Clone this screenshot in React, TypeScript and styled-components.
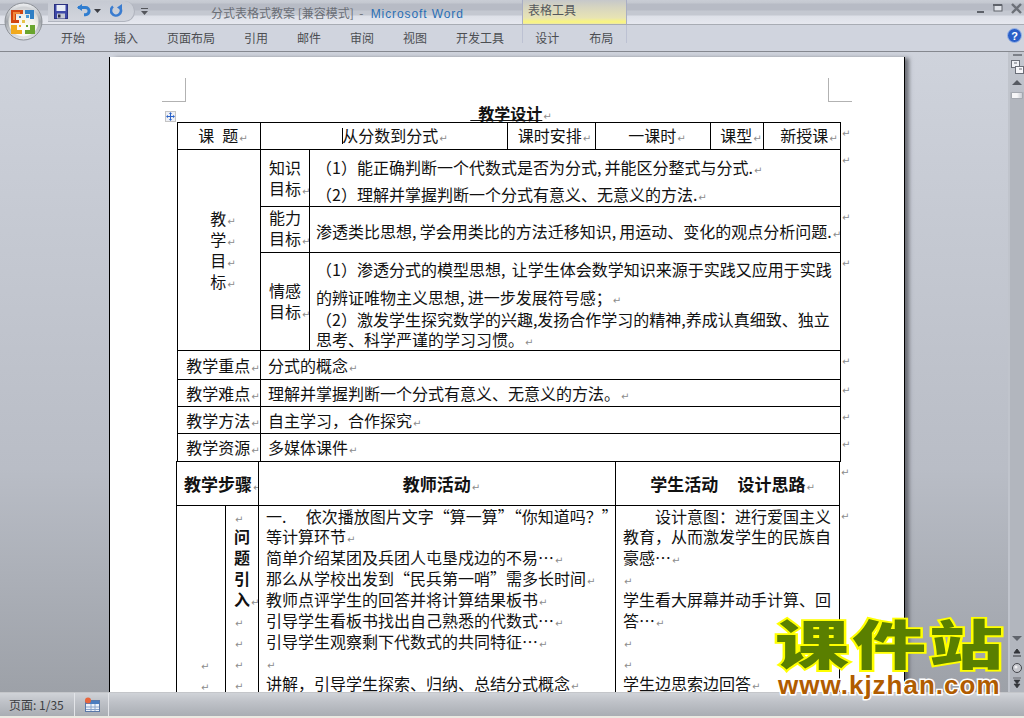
import React from "react"
import styled, { createGlobalStyle } from "styled-components"

const cjk = `"Noto Sans CJK SC", "Liberation Sans", sans-serif`

const GlobalStyle = createGlobalStyle`
  html, body { margin: 0; padding: 0; background: #c8ccd5; }
  body { font-family: ${cjk}; overflow: hidden; }
`

const Window = styled.div`
  position: relative;
  width: 1024px;
  height: 718px;
  display: flex;
  flex-direction: column;
  overflow: hidden;
`

const TitleBar = styled.div`
  height: 24px;
  flex: none;
  display: flex;
  align-items: flex-start;
  padding-left: 48px;
  border-bottom: 1px solid #a8acb4;
  background: linear-gradient(#c9cdd5 0, #c4c8d0 3px, #b7bbc5 4px, #b7bbc5 10px, #c4c8d1 11px, #c4c8d1 15px, #dde0e8 16px, #e6e8ef 24px);
`

const QuickAccess = styled.div`
  width: 87px;
  height: 21px;
  box-sizing: border-box;
  display: flex;
  align-items: center;
  padding-left: 6px;
  border: 1px solid #b0b4be;
  border-left: 0;
  border-top: 0;
  border-radius: 0 11px 11px 0;
  background: linear-gradient(#c6cad3, #d2d5dd);
  margin-top: 1px;
`

const QuickGap = styled.span<{ $w: number }>`
  display: inline-block;
  width: ${(p) => p.$w}px;
`

const CustomizeSlot = styled.div`
  padding-top: 8px;
  line-height: 0;
`

const DocTitle = styled.div`
  width: 310px;
  margin-left: 63px;
  font-size: 12px;
  line-height: 25px;
  color: #6a6e76;
  white-space: nowrap;
  span { color: #2a6fb5; font-family: "Liberation Sans", sans-serif; letter-spacing: 0.9px; margin-left: 2px; }
`

const ContextTitle = styled.div`
  width: 105px;
  height: 24px;
  margin-left: 1px;
  box-sizing: border-box;
  padding-left: 5px;
  font-size: 12px;
  line-height: 20px;
  color: #55575c;
  border-left: 1px solid #a9aec4;
  border-right: 1px solid #a9aec4;
  background: linear-gradient(#c6c8ca 0, #d8d6bf 8px, #e8e4b4 18px, #fbf67c 22px, #ece8a8 24px);
`

const WindowControls = styled.div`
  margin-left: auto;
  padding-top: 2px;
  height: 17px;
  line-height: 0;
`

const TabBar = styled.div`
  height: 26px;
  flex: none;
  display: flex;
  align-items: flex-start;
  padding-left: 61px;
  border-bottom: 1px solid #85888f;
  background: #d0d4de;
`

const TabGroup = styled.div`
  display: flex;
  gap: 29px;
  height: 18px;
`

const ContextGroup = styled(TabGroup)`
  margin-left: 18px;
  width: 105px;
  box-sizing: border-box;
  padding-left: 12px;
  gap: 30px;
  border-left: 1px solid #bcc1d2;
  border-right: 1px solid #bcc1d2;
`

const Tab = styled.div`
  font-size: 12px;
  line-height: 26px;
  color: #4c4e52;
  white-space: nowrap;
`

const HelpSlot = styled.div`
  margin-left: auto;
  margin-top: 3px;
  padding-right: 2px;
  line-height: 0;
`

const Workspace = styled.div`
  flex: 1;
  min-height: 0;
  display: flex;
  overflow: hidden;
  background: linear-gradient(#cfd3dc 0, #c6cad3 25%, #b9bdc6 65%, #9da1a8 100%);
`

const PageArea = styled.div`
  flex: 1;
  min-width: 0;
  padding: 5px 0 0 109px;
  overflow: hidden;
`

const Page = styled.div`
  position: relative;
  width: 727px;
  height: 900px;
  background: #fff;
  border-left: 1px solid #000;
  border-right: 1px solid #000;
  box-shadow: 5px 0 4px -1px rgba(60, 62, 68, 0.65);
  padding: 47px 0 0 67px;
  color: #111;
  font-size: 16px;
`

const CropMark = styled.div<{ $side: "left" | "right" }>`
  position: absolute;
  top: 21px;
  width: 23px;
  height: 23px;
  border-bottom: 1px solid #b2b2b2;
  ${(p) =>
    p.$side === "left"
      ? "left: 52px; border-right: 1px solid #b2b2b2;"
      : "left: 718px; border-left: 1px solid #b2b2b2;"}
`

const TableHandle = styled.div`
  position: absolute;
  top: 54px;
  left: 55px;
  width: 11px;
  height: 11px;
  box-sizing: border-box;
  border: 1px solid #c4c4c4;
  background: #eef0f6;
  line-height: 0;
`

const DocHeading = styled.div`
  width: 664px;
  height: 18px;
  line-height: 18px;
  text-align: center;
  font-weight: 700;
  white-space: pre;
  padding-left: 4px;
  box-sizing: border-box;
  u { text-underline-offset: 0; }
`

const DocTable = styled.table<{ $shift?: number; $up?: number }>`
  width: 682px;
  border-collapse: collapse;
  table-layout: fixed;
  margin-left: ${(p) => p.$shift ?? 0}px;
  margin-top: ${(p) => -(p.$up ?? 0)}px;
  line-height: 21px;
`

const Col = styled.col<{ $w: number }>`
  width: ${(p) => p.$w}px;
`

const Row = styled.tr<{ $h: number }>`
  height: ${(p) => p.$h}px;
`

const Cell = styled.td<{
  $center?: boolean
  $pad?: number
  $top?: boolean
  $bold?: boolean
  $above?: number
  $below?: number
}>`
  border: 1px solid #000;
  padding: ${(p) => p.$above ?? 0}px 0 ${(p) => p.$below ?? 0}px ${(p) => p.$pad ?? 0}px;
  text-align: ${(p) => (p.$center ? "center" : "left")};
  vertical-align: ${(p) => (p.$top ? "top" : "middle")};
  font-weight: ${(p) => (p.$bold ? 700 : 400)};
  font-size: ${(p) => (p.$bold ? 17 : 16)}px;
  white-space: pre;
  overflow: hidden;
`

const RowEnd = styled.td`
  border: 0;
  padding: 0;
  vertical-align: top;
  line-height: 14px;
`

const Line = styled.div<{ $h?: number }>`
  line-height: ${(p) => p.$h ?? 21}px;
  height: ${(p) => p.$h ?? 21}px;
  white-space: pre;
`

const Mark = styled.span`
  font: 10px/1 "DejaVu Sans", sans-serif;
  color: #8c8c8c;
  margin-left: 1px;
  &::before { content: "↵"; }
`

const Caret = styled.span`
  display: inline-block;
  width: 1px;
  height: 16px;
  margin-right: -1px;
  background: #000;
  vertical-align: -2px;
`

const StepMarks = styled.div`
  padding-top: 147px;
`

const StepTitle = styled.div`
  font-weight: 700;
  text-align: left;
  padding-left: 8px;
`

const Scrollbar = styled.div`
  width: 16px;
  flex: none;
  display: flex;
  flex-direction: column;
  align-items: center;
  background: #b2b6be;
  border-left: 2px solid #c0c4cc;
  box-sizing: border-box;
`

const ScrollTop = styled.div`
  height: 40px;
  width: 100%;
  flex: none;
  display: flex;
  flex-direction: column;
  align-items: center;
  background: linear-gradient(#c4c8d0, #bcc0c9);
`

const ScrollThumb = styled.div`
  width: 12px;
  height: 7px;
  flex: none;
  border-radius: 1px;
  border: 1px solid #a4a8b0;
  box-sizing: border-box;
  background: linear-gradient(90deg, #f6f6f8 50%, #c8cbd2);
`

const ScrollFill = styled.div`
  flex: 1;
`

const ScrollFoot = styled.div`
  height: 57px;
  width: 100%;
  flex: none;
  display: flex;
  flex-direction: column;
  align-items: center;
  gap: 3px;
`

const StatusBar = styled.div`
  height: 23px;
  flex: none;
  display: flex;
  border-top: 1px solid #c4c6ca;
  border-bottom: 2px solid #ebeae2;
  background: linear-gradient(#d0d3d8 0, #c0c3c9 35%, #a9adb3 100%);
`

const StatusCell = styled.div<{ $w: number }>`
  width: ${(p) => p.$w}px;
  box-sizing: border-box;
  display: flex;
  align-items: center;
  padding-left: 9px;
  border-right: 1px solid #e2e4e8;
  font-size: 12px;
  color: #3c3e42;
  white-space: nowrap;
`

const Watermark = styled.div`
  position: absolute;
  left: 775px;
  top: 610px;
  width: 240px;
  pointer-events: none;
`

const WatermarkName = styled.div`
  font-size: 74px;
  line-height: 74px;
  height: 62px;
  font-weight: 900;
  letter-spacing: 3px;
  white-space: nowrap;
  color: #5a7f00;
  -webkit-text-stroke: 5px #ffff00;
  paint-order: stroke fill;
  transform: scaleY(0.72);
  transform-origin: 0 30%;
`

const WatermarkUrl = styled.div`
  font: 700 26px/26px "Liberation Sans", sans-serif;
  letter-spacing: 1px;
  margin-left: 3px;
  color: #b05c00;
  -webkit-text-stroke: 3px #ffffff;
  paint-order: stroke fill;
  white-space: nowrap;
`

const OfficeButton = styled.div`
  position: absolute;
  left: 4px;
  top: 2px;
  width: 40px;
  height: 40px;
`

const OfficeLogo = () => (
  <svg width="40" height="40" viewBox="0 0 40 40">
    <defs>
      <linearGradient id="rim" x1="0" y1="0" x2="0" y2="1">
        <stop offset="0" stopColor="#eef0f2" />
        <stop offset="0.5" stopColor="#a2a6ac" />
        <stop offset="1" stopColor="#e8eaec" />
      </linearGradient>
      <radialGradient id="glass" cx="0.5" cy="0.75" r="0.7">
        <stop offset="0" stopColor="#fff" />
        <stop offset="0.6" stopColor="#f4f2ea" />
        <stop offset="1" stopColor="#cfd1d4" />
      </radialGradient>
    </defs>
    <circle cx="19.5" cy="19.5" r="18.5" fill="url(#rim)" stroke="#8e9298" />
    <circle cx="19.5" cy="19.5" r="15" fill="url(#glass)" />
    <path d="M7 8h12v4h-7v6h3v3H7z" fill="#d2440f" />
    <path d="M9 10h7v2h-5v6H9z" fill="#f08a3c" />
    <path d="M21 8h9v9h-4v-5h-5z" fill="#2f7fc4" />
    <rect x="22" y="13" width="3" height="3" fill="#4a9ad8" />
    <path d="M7 23h6v5h5v4H7z" fill="#f1a91c" />
    <path d="M21 28h5v-5h5v9H21z" fill="#6aa52d" />
    <rect x="15" y="14" width="2" height="2" fill="#3a7fc0" />
    <rect x="18" y="18" width="3" height="3" fill="#e6c24a" />
    <rect x="15" y="23" width="2" height="2" fill="#f1a91c" />
    <rect x="22" y="23" width="2" height="2" fill="#6aa52d" />
  </svg>
)

const SaveIcon = () => (
  <svg width="14" height="15" viewBox="0 0 14 15">
    <rect x="0.5" y="0.5" width="13" height="14" fill="#3d48a8" stroke="#2b3180" />
    <rect x="2.5" y="1" width="9" height="6" fill="#e8ecf6" />
    <rect x="3" y="9.5" width="8" height="5" fill="#c4c8d4" />
    <rect x="4" y="10.5" width="2.5" height="3" fill="#2b2b40" />
  </svg>
)

const UndoIcon = () => (
  <svg width="14" height="14" viewBox="0 0 14 14">
    <path d="M1 3.5h7.5a3.6 3.6 0 0 1 0 7.2H7" fill="none" stroke="#2f7dd0" strokeWidth="3" />
    <path d="M0 3.5 L5 0 V7z" fill="#2f7dd0" />
  </svg>
)

const RedoIcon = () => (
  <svg width="13" height="14" viewBox="0 0 13 14">
    <path d="M3 2.5a5 5 0 1 0 7 1" fill="none" stroke="#3a7cd0" strokeWidth="2.6" />
    <path d="M7 0v7l5-3.5z" fill="#3a7cd0" transform="rotate(180 9.5 3.5)" />
  </svg>
)

const SmallArrow = () => (
  <svg width="7" height="4" viewBox="0 0 7 4">
    <path d="M0 0h7L3.5 4z" fill="#3c3e44" />
  </svg>
)

const CustomizeArrow = () => (
  <svg width="7" height="7" viewBox="0 0 7 7">
    <rect y="0" width="7" height="1" fill="#54565c" />
    <path d="M0 3h7L3.5 7z" fill="#54565c" />
  </svg>
)

const WindowGlyphs = () => (
  <svg width="47" height="16" viewBox="0 0 47 16">
    <rect x="0" y="9" width="7" height="2" fill="#5e626a" />
    <rect x="17" y="3" width="8" height="6" fill="#dfe2e8" stroke="#5e626a" />
    <rect x="16" y="2" width="9" height="2" fill="#5e626a" />
    <path d="M35 2 L44 11 M44 2 L35 11" stroke="#6c7078" strokeWidth="2.4" />
  </svg>
)

const HelpIcon = () => (
  <svg width="15" height="15" viewBox="0 0 15 15">
    <circle cx="7.500" cy="7.500" r="7" fill="#2a5fc8" stroke="#9db6e6" />
    <text x="7.500" y="11.500" textAnchor="middle" fontSize="11" fontWeight="700" fontFamily="Liberation Sans" fill="#fff">
      ?
    </text>
  </svg>
)

const MoveGlyph = () => (
  <svg width="9" height="9" viewBox="0 0 9 9">
    <path d="M4.500 0 6 2H5v2h2V3l2 1.500L7 6V5H5v2h1L4.500 9 3 7h1V5H2v1L0 4.500 2 3v1h2V2H3z" fill="#2a62c8" />
  </svg>
)

const ScrollDash = () => (
  <svg width="12" height="8" viewBox="0 0 12 8">
    <rect x="2" y="2" width="9" height="2" fill="#7c8088" />
  </svg>
)

const RulerToggle = () => (
  <svg width="13" height="15" viewBox="0 0 13 15">
    <rect x="0.5" y="0.5" width="8" height="7" fill="#eef0f5" stroke="#6a6e78" />
    <rect x="4.500" y="6.500" width="8" height="7" fill="#f6f6fa" stroke="#6a6e78" />
    <path d="M3 3h3M8 9h3" stroke="#6a6e78" />
  </svg>
)

const ScrollUp = () => (
  <svg width="12" height="17" viewBox="0 0 12 17">
    <path d="M1 10h10L6 5z" fill="#565a62" />
  </svg>
)

const ScrollDown = () => (
  <svg width="12" height="9" viewBox="0 0 12 9">
    <path d="M1 1h10L6 6z" fill="#60646c" />
  </svg>
)

const PrevPage = () => (
  <svg width="10" height="12" viewBox="0 0 10 12">
    <path d="M1 9h8M5 2 L2 6h6z" fill="#33353a" stroke="#33353a" />
  </svg>
)

const SelectBrowse = () => (
  <svg width="12" height="12" viewBox="0 0 12 12">
    <circle cx="6" cy="6" r="4.500" fill="#c4c6cc" stroke="#44464c" />
    <circle cx="5" cy="5" r="1.500" fill="#f0f0f2" />
  </svg>
)

const NextPage = () => (
  <svg width="10" height="12" viewBox="0 0 10 12">
    <path d="M1 1h8M2 3h6L5 7zM2 7h6l-3 4z" fill="#33353a" stroke="#33353a" strokeWidth="0.6" />
  </svg>
)

const PresentationIcon = () => (
  <svg width="16" height="16" viewBox="0 0 16 16">
    <rect x="1.500" y="3.500" width="14" height="11" fill="#eef2fa" stroke="#5a78a8" />
    <rect x="2" y="4" width="13" height="3" fill="#4a7cc0" />
    <path d="M2 10h13M2 12.500h13M7 7v7M11 7v7" stroke="#8aa4cc" />
    <circle cx="4" cy="3.500" r="3" fill="#e8653c" />
  </svg>
)

const firstCols = [83, 49, 198, 88, 115, 53, 77, 19]
const secondCols = [49, 33, 357, 224, 19]

const ColSet = ({ widths }: { widths: number[] }) => (
  <colgroup>
    {widths.map((w, i) => (
      <Col key={i} $w={w} />
    ))}
  </colgroup>
)

const simpleRows: [string, string, number, number][] = [
  ["教学重点", "分式的概念", 29, 7],
  ["教学难点", "理解并掌握判断一个分式有意义、无意义的方法。", 27, 7],
  ["教学方法", "自主学习，合作探究", 27, 7],
  ["教学资源", "多媒体课件", 28, 7],
]

const teacherLines = [
  "一.\u2009　依次播放图片文字“算一算”“你知道吗？”",
  "等计算环节",
  "简单介绍某团及兵团人屯垦戍边的不易…",
  "那么从学校出发到“民兵第一哨”需多长时间",
  "教师点评学生的回答并将计算结果板书",
  "引导学生看板书找出自己熟悉的代数式…",
  "引导学生观察剩下代数式的共同特征…",
  "",
  "讲解，引导学生探索、归纳、总结分式概念",
]

const studentLines: [string, boolean][] = [
  ["　　设计意图：进行爱国主义", false],
  ["教育，从而激发学生的民族自", true],
  ["豪感…", false],
  ["", false],
  ["学生看大屏幕并动手计算、回", true],
  ["答…", false],
  ["", false],
  ["", false],
  ["学生边思索边回答", false],
]

const App = () => {
  return (
    <Window lang="zh-CN">
      <GlobalStyle />
      <TitleBar>
        <QuickAccess>
          <SaveIcon />
          <QuickGap $w={9} />
          <UndoIcon />
          <QuickGap $w={3} />
          <SmallArrow />
          <QuickGap $w={9} />
          <RedoIcon />
        </QuickAccess>
        <QuickGap $w={6} />
        <CustomizeSlot>
          <CustomizeArrow />
        </CustomizeSlot>
        <DocTitle>
          分式表格式教案 [兼容模式]&nbsp;&nbsp;-&nbsp;&nbsp;<span>Microsoft Word</span>
        </DocTitle>
        <ContextTitle>表格工具</ContextTitle>
        <WindowControls>
          <WindowGlyphs />
        </WindowControls>
      </TitleBar>
      <TabBar>
        <TabGroup>
          {["开始", "插入", "页面布局", "引用", "邮件", "审阅", "视图", "开发工具"].map((t) => (
            <Tab key={t}>{t}</Tab>
          ))}
        </TabGroup>
        <ContextGroup>
          <Tab>设计</Tab>
          <Tab>布局</Tab>
        </ContextGroup>
        <HelpSlot>
          <HelpIcon />
        </HelpSlot>
      </TabBar>
      <Workspace>
        <PageArea>
          <Page>
            <CropMark $side="left" />
            <CropMark $side="right" />
            <TableHandle>
              <MoveGlyph />
            </TableHandle>
            <DocHeading>
              <u>{"\u2002教学设计"}</u>
              <Mark />
            </DocHeading>
            <DocTable>
              <ColSet widths={firstCols} />
              <tbody>
                <Row $h={27}>
                  <Cell $center $pad={8} $below={2}>
                    课{"\u2002"}题
                    <Mark />
                  </Cell>
                  <Cell $center colSpan={2} $pad={22} $below={2}>
                    <Caret />
                    从分数到分式
                    <Mark />
                  </Cell>
                  <Cell $center $pad={6} $below={2}>
                    课时安排
                    <Mark />
                  </Cell>
                  <Cell $center $pad={8} $below={2}>
                    一课时
                    <Mark />
                  </Cell>
                  <Cell $center $pad={8} $below={2}>
                    课型
                    <Mark />
                  </Cell>
                  <Cell $center $pad={14} $below={2}>
                    新授课
                    <Mark />
                  </Cell>
                  <RowEnd>
                    <Mark />
                  </RowEnd>
                </Row>
                <Row $h={57}>
                  <Cell $center rowSpan={3} $pad={8}>
                    <Line>
                      教<Mark />
                    </Line>
                    <Line>
                      学<Mark />
                    </Line>
                    <Line>
                      目<Mark />
                    </Line>
                    <Line>
                      标<Mark />
                    </Line>
                  </Cell>
                  <Cell $pad={8}>
                    <Line>知识</Line>
                    <Line>
                      目标
                      <Mark />
                    </Line>
                  </Cell>
                  <Cell $pad={6} colSpan={5} $top>
                    <Line $h={35}>
                      （1）能正确判断一个代数式是否为分式,{"\u2009"}并能区分整式与分式.
                      <Mark />
                    </Line>
                    <Line $h={19}>
                      （2）理解并掌握判断一个分式有意义、无意义的方法.
                      <Mark />
                    </Line>
                  </Cell>
                  <RowEnd>
                    <Mark />
                  </RowEnd>
                </Row>
                <Row $h={46}>
                  <Cell $pad={8} $below={3}>
                    <Line>能力</Line>
                    <Line>
                      目标
                      <Mark />
                    </Line>
                  </Cell>
                  <Cell $pad={6} colSpan={5} $above={4}>
                    渗透类比思想,{"\u2009"}学会用类比的方法迁移知识,{"\u2009"}用运动、变化的观点分析问题.
                    <Mark />
                  </Cell>
                  <RowEnd>
                    <Mark />
                  </RowEnd>
                </Row>
                <Row $h={98}>
                  <Cell $pad={8} $below={2}>
                    <Line>情感</Line>
                    <Line>
                      目标
                      <Mark />
                    </Line>
                  </Cell>
                  <Cell $pad={6} colSpan={5} $top>
                    <Line $h={33}>（1）渗透分式的模型思想,{"\u2009\u2009"}让学生体会数学知识来源于实践又应用于实践</Line>
                    <Line $h={23}>
                      的辨证唯物主义思想,{"\u2009"}进一步发展符号感；
                      <Mark />
                    </Line>
                    <Line $h={20}>（2）激发学生探究数学的兴趣,发扬合作学习的精神,养成认真细致、独立</Line>
                    <Line>
                      思考、科学严谨的学习习惯。
                      <Mark />
                    </Line>
                  </Cell>
                  <RowEnd>
                    <Mark />
                  </RowEnd>
                </Row>
                {simpleRows.map(([label, text, h, pad]) => (
                  <Row key={label} $h={h}>
                    <Cell $center $pad={8}>
                      {label}
                      <Mark />
                    </Cell>
                    <Cell $pad={pad} colSpan={6}>
                      {text}
                      <Mark />
                    </Cell>
                    <RowEnd>
                      <Mark />
                    </RowEnd>
                  </Row>
                ))}
              </tbody>
            </DocTable>
            <DocTable $shift={-1} $up={1}>
              <ColSet widths={secondCols} />
              <tbody>
                <Row $h={44}>
                  <Cell $center $bold colSpan={2} $pad={7}>
                    教学步骤
                    <Mark />
                  </Cell>
                  <Cell $center $bold $pad={9}>
                    教师活动
                    <Mark />
                  </Cell>
                  <Cell $center $bold $pad={10}>
                    学生活动{"     "}设计思路
                    <Mark />
                  </Cell>
                  <RowEnd>
                    <Mark />
                  </RowEnd>
                </Row>
                <Row $h={300}>
                  <Cell $top $pad={23}>
                    <StepMarks>
                      <Line>
                        <Mark />
                      </Line>
                      <Line>
                        <Mark />
                      </Line>
                    </StepMarks>
                  </Cell>
                  <Cell $top>
                    <Line $h={20}>
                      <StepTitle>
                        <Mark />
                      </StepTitle>
                    </Line>
                    {["问", "题", "引", "入"].map((ch) => (
                      <Line key={ch}>
                        <StepTitle>
                          {ch}
                          {ch === "入" && <Mark />}
                        </StepTitle>
                      </Line>
                    ))}
                    {[0, 1, 2, 3].map((i) => (
                      <Line key={i}>
                        <StepTitle>
                          <Mark />
                        </StepTitle>
                      </Line>
                    ))}
                  </Cell>
                  <Cell $top $pad={7}>
                    {teacherLines.map((line, i) => (
                      <Line key={i} $h={i === 0 ? 20 : 21}>
                        {line}
                        {i > 0 && <Mark />}
                      </Line>
                    ))}
                  </Cell>
                  <Cell $top $pad={7}>
                    {studentLines.map(([line, wrapped], i) => (
                      <Line key={i} $h={i === 0 ? 20 : 21}>
                        {line}
                        {!wrapped && i > 0 && <Mark />}
                      </Line>
                    ))}
                  </Cell>
                  <RowEnd>
                    <Mark />
                  </RowEnd>
                </Row>
              </tbody>
            </DocTable>
          </Page>
        </PageArea>
        <Scrollbar>
          <ScrollTop>
            <ScrollDash />
            <RulerToggle />
            <ScrollUp />
          </ScrollTop>
          <ScrollThumb />
          <ScrollFill />
          <ScrollFoot>
            <ScrollDown />
            <PrevPage />
            <SelectBrowse />
            <NextPage />
          </ScrollFoot>
        </Scrollbar>
      </Workspace>
      <StatusBar>
        <StatusCell $w={75}>页面: 1/35</StatusCell>
        <StatusCell $w={34}>
          <PresentationIcon />
        </StatusCell>
      </StatusBar>
      <OfficeButton>
        <OfficeLogo />
      </OfficeButton>
      <Watermark>
        <WatermarkName>课件站</WatermarkName>
        <WatermarkUrl>www.kjzhan.com</WatermarkUrl>
      </Watermark>
    </Window>
  )
}

export default App
